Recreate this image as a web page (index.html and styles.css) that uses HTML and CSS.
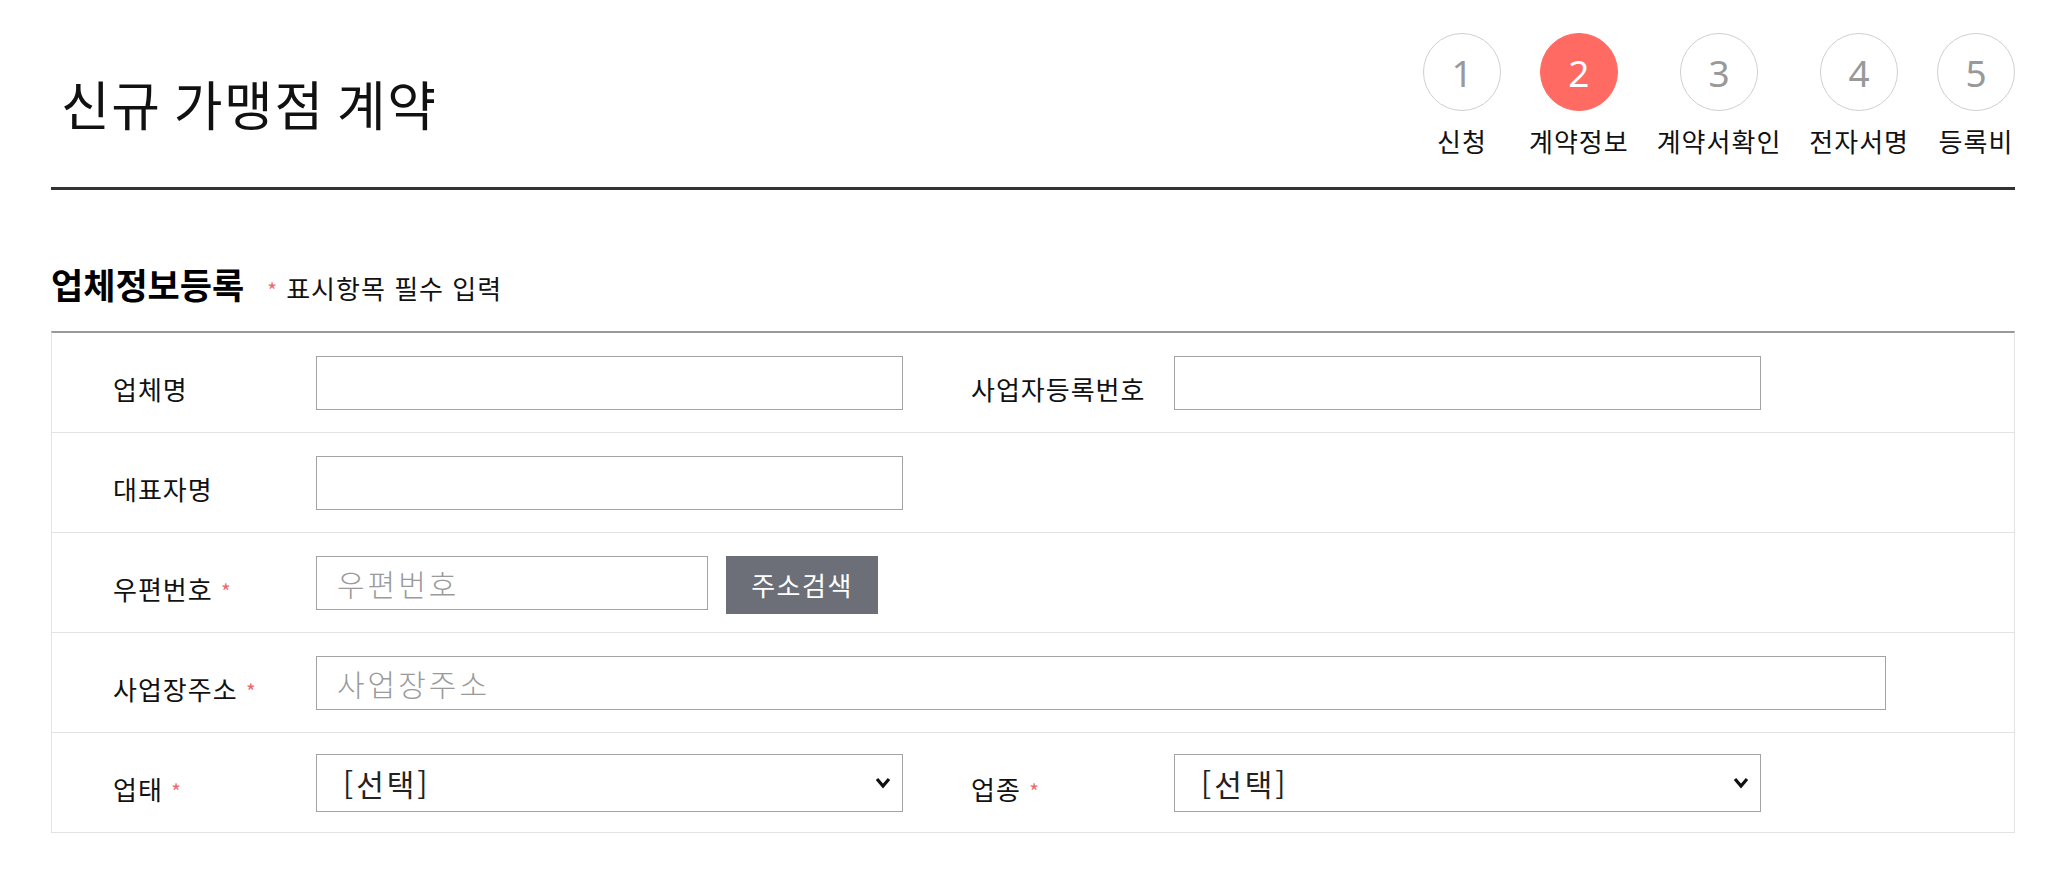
FILE: index.html
```html
<!DOCTYPE html>
<html lang="ko">
<head>
<meta charset="utf-8">
<title>신규 가맹점 계약</title>
<link rel="stylesheet" href="styles.css">
</head>
<body>
<div class="page">
  <header class="header">
    <h1 class="title">신규 가맹점 계약</h1>
    <ol class="steps">
      <li class="step"><span class="step-num">1</span><span class="step-label">신청</span></li>
      <li class="step active"><span class="step-num">2</span><span class="step-label">계약정보</span></li>
      <li class="step"><span class="step-num">3</span><span class="step-label">계약서확인</span></li>
      <li class="step"><span class="step-num">4</span><span class="step-label">전자서명</span></li>
      <li class="step"><span class="step-num">5</span><span class="step-label">등록비</span></li>
    </ol>
  </header>

  <section class="section">
    <div class="section-head">
      <h2 class="section-title">업체정보등록</h2>
      <span class="section-note"><span class="req">*</span> 표시항목 필수 입력</span>
    </div>

    <div class="form">
      <div class="row">
        <label class="label">업체명</label>
        <input class="input half" type="text">
        <label class="label second">사업자등록번호</label>
        <input class="input half" type="text">
      </div>
      <div class="row">
        <label class="label">대표자명</label>
        <input class="input half" type="text">
      </div>
      <div class="row">
        <label class="label">우편번호 <span class="req">*</span></label>
        <div class="zip">
          <input class="input zip-input" type="text" placeholder="우편번호">
          <button class="btn" type="button">주소검색</button>
        </div>
      </div>
      <div class="row">
        <label class="label">사업장주소 <span class="req">*</span></label>
        <input class="input full" type="text" placeholder="사업장주소">
      </div>
      <div class="row">
        <label class="label">업태 <span class="req">*</span></label>
        <div class="select-wrap">
          <select class="select"><option>[선택]</option></select>
          <svg class="chev" viewBox="0 0 16 12" width="16" height="12"><path d="M2 2 L8 9 L14 2" fill="none" stroke="#111" stroke-width="3.2" stroke-linejoin="miter"/></svg>
        </div>
        <label class="label second">업종 <span class="req">*</span></label>
        <div class="select-wrap">
          <select class="select"><option>[선택]</option></select>
          <svg class="chev" viewBox="0 0 16 12" width="16" height="12"><path d="M2 2 L8 9 L14 2" fill="none" stroke="#111" stroke-width="3.2" stroke-linejoin="miter"/></svg>
        </div>
      </div>
    </div>
  </section>
</div>
</body>
</html>
```

FILE: styles.css
```css
* { box-sizing: border-box; }

body {
  margin: 0;
  background: #fff;
  color: #222;
  font-family: "Noto Sans CJK KR", "Noto Sans", sans-serif;
}

.page {
  padding: 0 33px 0 51px;
}

.header {
  display: flex;
  justify-content: space-between;
  align-items: flex-start;
  padding-top: 33px;
  height: 190px;
  border-bottom: 3px solid #333;
}

.title {
  margin: 40px 0 0 10px;
  font-size: 53px;
  font-weight: 400;
  line-height: 60px;
  color: #111;
  letter-spacing: 1.5px;
  word-spacing: -4px;
}

.steps {
  display: flex;
  gap: 28px;
  margin: 0;
  padding: 0;
  list-style: none;
}

.step {
  display: flex;
  flex-direction: column;
  align-items: center;
}

.step-num {
  display: flex;
  align-items: center;
  justify-content: center;
  width: 78px;
  height: 78px;
  border: 1px solid #cfcfcf;
  border-radius: 50%;
  font-family: "Noto Sans", "Noto Sans CJK KR", sans-serif;
  font-size: 37px;
  color: #999;
  line-height: 1;
}

.step.active .step-num {
  background: #ff6a62;
  border-color: #ff6a62;
  color: #fff;
}

.step-label {
  margin-top: 13px;
  font-size: 26px;
  line-height: 34px;
  letter-spacing: 1px;
  color: #111;
  white-space: nowrap;
}

.section-head {
  display: flex;
  align-items: baseline;
  margin-top: 71px;
  margin-bottom: 24px;
  height: 46px;
}

.section-title {
  margin: 0;
  font-size: 35px;
  font-weight: 700;
  line-height: 46px;
  color: #000;
}

.section-note {
  margin-left: 23px;
  font-size: 26px;
  letter-spacing: 1px;
  color: #111;
}

.req {
  color: #f0676a;
  font-size: 0.8em;
}

.form {
  border-top: 2px solid #999;
  border-left: 1px solid #e3e3e3;
  border-right: 1px solid #e3e3e3;
}

.row {
  display: flex;
  align-items: center;
  height: 100px;
  padding-left: 61px;
  border-bottom: 1px solid #e3e3e3;
}

.label {
  flex: 0 0 203px;
  padding-top: 12px;
  font-size: 26px;
  letter-spacing: 1px;
  color: #111;
  white-space: nowrap;
}

.label.second {
  margin-left: 68px;
}

.input {
  height: 54px;
  border: 1px solid #a3a3a3;
  padding: 0 20px;
  font-family: inherit;
  font-size: 30px;
  letter-spacing: 3px;
  color: #333;
  background: #fff;
  outline: none;
}

.input::placeholder {
  color: #9a9a9a;
  font-weight: 300;
}

.half { width: 587px; }
.full { width: 1570px; }

.zip {
  display: flex;
  align-items: flex-start;
  gap: 18px;
  margin-top: 4px;
}

.zip-input { width: 392px; }

.btn {
  width: 152px;
  height: 58px;
  border: 0;
  background: #6c6f77;
  color: #fff;
  font-family: inherit;
  font-size: 26px;
  letter-spacing: 1.5px;
  padding: 0;
}

.select-wrap {
  position: relative;
  width: 587px;
  height: 58px;
}

.select {
  appearance: none;
  -webkit-appearance: none;
  width: 100%;
  height: 100%;
  border: 1px solid #a3a3a3;
  border-radius: 0;
  background: #fff;
  padding: 0 40px 0 26px;
  font-family: inherit;
  font-size: 30px;
  letter-spacing: 3px;
  color: #222;
}

.chev {
  position: absolute;
  right: 12px;
  top: 23px;
  pointer-events: none;
}
```
